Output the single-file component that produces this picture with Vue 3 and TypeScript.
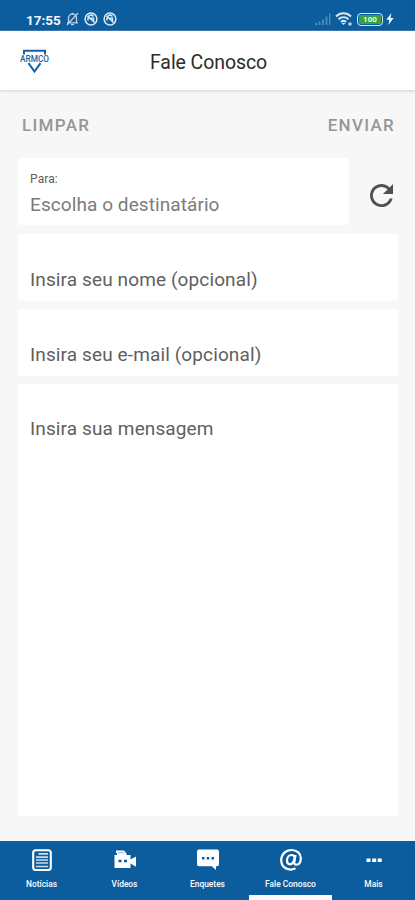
<script setup lang="ts">
import { ref } from 'vue'

interface Tab {
  id: string
  label: string
}

const tabs: Tab[] = [
  { id: 'news', label: 'Notícias' },
  { id: 'videos', label: 'Vídeos' },
  { id: 'polls', label: 'Enquetes' },
  { id: 'contact', label: 'Fale Conosco' },
  { id: 'more', label: 'Mais' },
]
const active = ref('contact')
</script>

<template>
  <div class="screen">
    <div class="status">
      <span class="clock">17:55</span>
      <svg class="bell" width="13" height="14" viewBox="0 0 13 14" fill="none" stroke="#bdd3e6" stroke-width="1.3">
        <path d="M2.500 10.500V6a4 4 0 0 1 8 0v4.500M1 10.800h11M5 12.700h3M6.500 2V.8M1 13 12 1" />
      </svg>
      <svg v-for="n in 2" :key="n" class="round" width="14" height="14" viewBox="0 0 14 14" fill="none" stroke="#dce9f4">
        <circle cx="7" cy="7" r="5.900" stroke-width="1.500" />
        <path d="M4 8.500V6a3 3 0 0 1 5.500-1.500M6 6.200h3.500v3M3.500 4l7 6.500" stroke-width="1.500" />
      </svg>
      <svg class="signal" width="16" height="13" viewBox="0 0 16 13" fill="#4f89ba">
        <path d="M0 10h2v2H0zM3.500 8.500h2V12h-2zM7 6.500h2V12H7zM10.500 3.500h2V12h-2zM14 .5h1.500V12H14z" />
      </svg>
      <svg class="wifi" width="17" height="14" viewBox="0 0 17 14" fill="none" stroke="#d7e8f4" stroke-width="2">
        <path d="M1 4.500c4.300-4.200 10.700-4.200 15 0M3.500 7.300c3-2.900 7-2.900 10 0M6 10c1.500-1.400 3.500-1.400 5 0" />
        <path d="m8.500 13-2-2h4z" fill="#d7e8f4" stroke="none" />
        <circle cx="15" cy="12" r="1.800" fill="#b8d0e4" stroke="none" />
      </svg>
      <span class="battery"><span class="charge">100</span></span>
      <svg class="bolt" width="8" height="12" viewBox="0 0 8 12" fill="#eef5fb">
        <path d="M5.500 0 .3 6.700h3L2.300 12l5.400-7H4.500z" />
      </svg>
    </div>

    <header class="header">
      <svg class="logo" width="32" height="26" viewBox="0 0 32 26">
        <path d="M5 6.500V2.700h21v3.800M9.500 15.200l6 8.300 6-8.300" fill="none" stroke="#1760a8" stroke-width="2" />
        <text x="1" y="14" textLength="29" lengthAdjust="spacingAndGlyphs">ARMCO</text>
      </svg>
      <h1>Fale Conosco</h1>
    </header>

    <main class="form">
      <div class="actions">
        <span>LIMPAR</span>
        <span>ENVIAR</span>
      </div>
      <div class="recipient">
        <div class="card to">
          <span class="caption">Para:</span>
          <span class="choice">Escolha o destinatário</span>
        </div>
        <svg class="reload" width="23" height="23" viewBox="4 4 16 16" fill="#515151">
          <path d="M17.650 6.350C16.200 4.900 14.210 4 12 4c-4.420 0-7.990 3.580-7.990 8s3.570 8 7.990 8c3.730 0 6.840-2.550 7.730-6h-2.080c-.82 2.330-3.040 4-5.650 4-3.310 0-6-2.690-6-6s2.690-6 6-6c1.660 0 3.140.69 4.220 1.780L13 11h7V4l-2.350 2.350z" />
        </svg>
      </div>
      <div class="card field">Insira seu nome (opcional)</div>
      <div class="card field">Insira seu e-mail (opcional)</div>
      <div class="card message">Insira sua mensagem</div>
    </main>

    <nav class="tabs">
      <div v-for="t in tabs" :key="t.id" class="tab" :class="{ active: t.id === active }" @click="active = t.id">
        <svg width="24" height="24" viewBox="0 0 24 24">
          <g v-if="t.id === 'news'" fill="none" stroke="#fff">
            <rect x="3.200" y="2.200" width="17.600" height="19.800" rx="2.500" stroke-width="2.100" />
            <path d="M8.500 5.800H18M6 9.200h12M6 12h12M6 15h12M6 18.500h12" stroke="#cbdcec" stroke-width="1.700" />
          </g>
          <g v-else-if="t.id === 'videos'" fill="#fff">
            <path d="M3 2.500h8l2.500 3V8H4V5H3z" />
            <path fill-rule="evenodd" d="M1.500 7h16v4.500L23 8.500v10.300l-5.500-3.300V20h-16zM5.500 11.700v2.600h3v-2.600zM11 11.700v2.600h3v-2.600z" />
            <path d="M5 4.700h6" stroke="#8aaed0" />
          </g>
          <g v-else-if="t.id === 'polls'">
            <path d="M3 1.500h18a2 2 0 0 1 2 2v12.700a2 2 0 0 1-2 2h-1V22l-4.300-3.800H3a2 2 0 0 1-2-2V3.500a2 2 0 0 1 2-2z" fill="#fff" />
            <path d="M6 9h2.500v2.500H6zM10.700 9h2.500v2.500h-2.500zM15.500 9H18v2.500h-2.500z" fill="#0b5d9d" />
          </g>
          <g v-else-if="t.id === 'contact'" fill="none" stroke="#fff" stroke-width="2.200">
            <path d="M16.500 20.300C9.500 23.800 2.200 19.500 2.200 12.300 2.200 6.200 6.800 2 12.500 2c5.500 0 9.500 3.500 9.300 8.700-.2 4-2.300 6-4.500 6-1.500 0-2.300-1-2-2.700L16.500 7" />
            <path d="M15.800 10c-.4-2.200-1.400-3-3.200-3-2.700 0-4.600 2.600-4.600 5.600 0 2.200 1 3.700 2.900 3.700 2.400 0 4-2.200 4.900-6.300z" />
          </g>
          <path v-else d="M4.500 10.500h4v3.500h-4zM10.200 10.500h4v3.500h-4zM15.700 10.500h4v3.500h-4z" fill="#fff" />
        </svg>
        <span>{{ t.label }}</span>
      </div>
    </nav>
  </div>
</template>

<style>
body {
  background: #f7f7f7;
}
</style>

<style scoped>
.screen {
  width: 415px;
  height: 900px;
  display: flex;
  flex-direction: column;
  overflow: hidden;
  background: #f7f7f7;
  font-family: Roboto, sans-serif;
}
.status {
  box-sizing: border-box;
  height: 31px;
  flex: none;
  display: flex;
  align-items: center;
  padding: 8px 21px 0 26px;
  background: #0b5d9d;
  border-bottom: 1px solid #3f7db1;
}
.clock {
  width: 40px;
  padding-top: 2px;
  color: #f4f8fc;
  font-size: 13.500px;
  font-weight: 700;
  line-height: 16px;
}
.round {
  margin-left: 5px;
}
.signal {
  margin-left: auto;
}
.wifi {
  margin-left: 4px;
}
.battery {
  box-sizing: border-box;
  width: 26px;
  height: 13px;
  margin-left: 5px;
  padding: 1px;
  border: 1.500px solid #d6e9ec;
  border-radius: 4px;
}
.charge {
  display: block;
  height: 9px;
  border-radius: 1px;
  background: #34a344;
  color: #e8ffe0;
  font-size: 8px;
  font-weight: 700;
  line-height: 9px;
  text-align: center;
}
.bolt {
  margin-left: 3px;
}
.header {
  height: 59px;
  flex: none;
  display: flex;
  align-items: center;
  background: #fff;
  box-shadow: 0 1px 3px rgba(0, 0, 0, 0.16);
}
.logo {
  margin-left: 19px;
}
.logo text {
  fill: #1760a8;
  font-size: 9px;
  font-weight: 500;
}
h1 {
  margin: 5px 0 0 99px;
  color: #2b2b2b;
  font-size: 19.500px;
  font-weight: 400;
  line-height: 24px;
  letter-spacing: -0.080px;
}
.form {
  flex: 1;
  display: flex;
  flex-direction: column;
  gap: 8px;
  padding: 0 17px 25px 18px;
}
.actions {
  height: 60px;
  box-sizing: border-box;
  display: flex;
  justify-content: space-between;
  padding: 25px 3px 0 4px;
  color: #969696;
  font-size: 17px;
  font-weight: 500;
  line-height: 20px;
  letter-spacing: 1.300px;
}
.card {
  box-sizing: border-box;
  border-radius: 3px;
  background: #fff;
  color: #606060;
  font-size: 19px;
  letter-spacing: 0.120px;
}
.recipient {
  height: 68px;
  display: flex;
  align-items: flex-start;
}
.to {
  width: 331px;
  height: 67px;
  display: flex;
  flex-direction: column;
  padding: 14px 12px 0;
}
.caption {
  font-size: 12px;
  line-height: 14px;
}
.choice {
  margin-top: 7px;
  color: #7b7b7b;
  line-height: 24px;
  letter-spacing: 0.080px;
}
.reload {
  margin: 26px 0 0 21px;
}
.field {
  height: 67px;
  padding: 34px 12px 0;
  line-height: 24px;
}
.message {
  flex: 1;
  padding: 33px 12px 0;
  line-height: 24px;
}
.tabs {
  height: 59px;
  flex: none;
  display: grid;
  grid-template-columns: repeat(5, 1fr);
  background: #0b5d9d;
}
.tab {
  box-sizing: border-box;
  display: flex;
  flex-direction: column;
  align-items: center;
  padding-top: 7px;
  border-bottom: 5px solid transparent;
  color: #fff;
  font-size: 8.400px;
  font-weight: 500;
  line-height: 10px;
}
.tab span {
  margin-top: 7px;
}
.active {
  border-bottom-color: #fff;
}
</style>
